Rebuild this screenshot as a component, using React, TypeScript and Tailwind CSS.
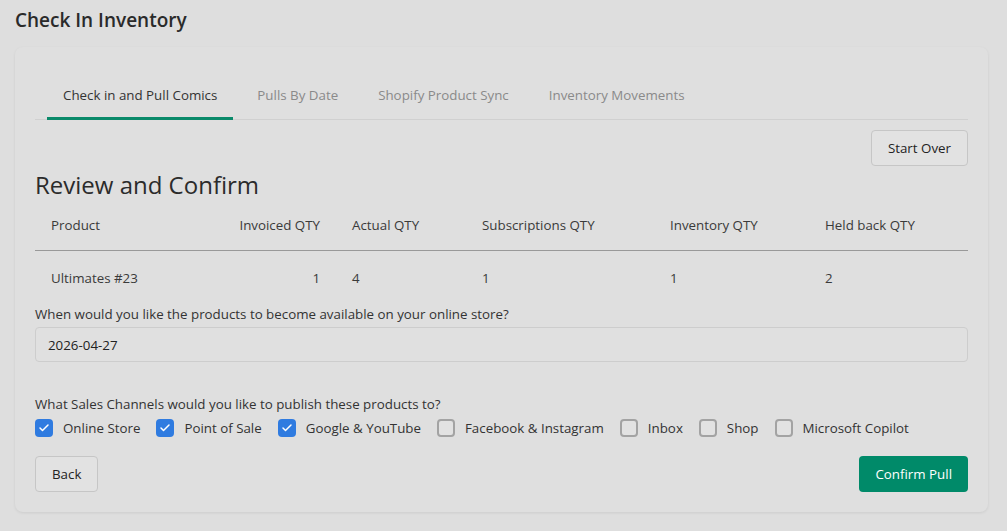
import { Check } from "lucide-react";

const tabs = [
  "Check in and Pull Comics",
  "Pulls By Date",
  "Shopify Product Sync",
  "Inventory Movements",
];

const channels = [
  { name: "Online Store", checked: true },
  { name: "Point of Sale", checked: true },
  { name: "Google & YouTube", checked: true },
  { name: "Facebook & Instagram", checked: false },
  { name: "Inbox", checked: false },
  { name: "Shop", checked: false },
  { name: "Microsoft Copilot", checked: false },
];

const cols = "grid grid-cols-[188px_113px_130px_188px_155px_1fr] whitespace-nowrap leading-5";

function Checkbox({ checked }: { checked: boolean }) {
  return checked ? (
    <span className="w-[18px] h-[18px] rounded-[4px] bg-[#2f7be0] flex items-center justify-center">
      <Check className="w-3 h-3 text-white" strokeWidth={3} />
    </span>
  ) : (
    <span className="w-[18px] h-[18px] rounded-[4px] border-2 border-[#a3a3a3] bg-[#e2e2e2]" />
  );
}

export default function App() {
  return (
    <div
      className="min-h-[531px] bg-[#dedede] text-[#2b2b2b] text-[13.33px] leading-5"
      style={{ fontFamily: '"Open Sans", "Noto Sans", sans-serif' }}
    >
      <div className="px-[15px] pt-[7px] pb-[19px]">
        <h1 className="text-[19px] font-semibold text-[#2a2a2a] leading-[26px]">
          Check In Inventory
        </h1>
        <div className="mt-[14px] w-[973px] bg-[#dfdfdf] rounded-lg shadow-[0_1px_3px_rgba(0,0,0,0.08)] px-5 pt-[38px] pb-5">
          <div className="flex border-b border-[#d0d0d0] pl-3 gap-2 whitespace-nowrap">
            {tabs.map((t, i) => (
              <div
                key={t}
                className={
                  i === 0
                    ? "px-4 pb-[12px] text-[#333] border-b-[3px] border-[#0a8a6a] -mb-px"
                    : "px-4 pb-[12px] text-[#8a8a8a] border-b-[3px] border-transparent -mb-px"
                }
              >
                {t}
              </div>
            ))}
          </div>
          <div className="flex justify-end mt-[10px]">
            <button className="h-9 px-4 rounded border border-[#c6c6c6] bg-[#e2e2e2] text-[#222]">
              Start Over
            </button>
          </div>
          <h2 className="text-2xl leading-8 text-[#2b2b2b] mt-[3px]">Review and Confirm</h2>
          <div className={`${cols} border-b border-[#999] text-[#3a3a3a] pt-[14px] pb-[15px]`}>
            <div className="px-4">Product</div>
            <div className="px-4 text-right">Invoiced QTY</div>
            <div className="px-4">Actual QTY</div>
            <div className="px-4">Subscriptions QTY</div>
            <div className="px-4">Inventory QTY</div>
            <div className="px-4">Held back QTY</div>
          </div>
          <div className={`${cols} text-[#3a3a3a] pt-[17px] pb-[6px]`}>
            <div className="px-4">Ultimates #23</div>
            <div className="px-4 text-right">1</div>
            <div className="px-4">4</div>
            <div className="px-4">1</div>
            <div className="px-4">1</div>
            <div className="px-4">2</div>
          </div>
          <label className="block mt-[10px] text-[#333]">
            When would you like the products to become available on your online store?
          </label>
          <div className="mt-[3px] h-[35px] rounded border border-[#cdcdcd] bg-[#e0e0e0] flex items-center px-3 text-[#222]">
            2026-04-27
          </div>
          <div className="mt-[32px] text-[#333]">
            What Sales Channels would you like to publish these products to?
          </div>
          <div className="flex items-center gap-4 mt-[4px] whitespace-nowrap">
            {channels.map((c) => (
              <div key={c.name} className="flex items-center gap-[10px]">
                <Checkbox checked={c.checked} />
                <span className="text-[#333]">{c.name}</span>
              </div>
            ))}
          </div>
          <div className="flex justify-between items-center mt-[18px]">
            <button className="h-9 px-4 rounded border border-[#c6c6c6] bg-[#e2e2e2] text-[#222]">
              Back
            </button>
            <button className="h-9 px-4 rounded bg-[#008a69] text-white">
              Confirm Pull
            </button>
          </div>
        </div>
      </div>
    </div>
  );
}
